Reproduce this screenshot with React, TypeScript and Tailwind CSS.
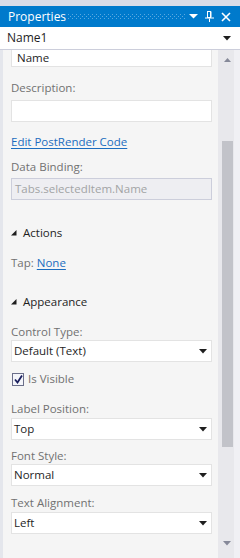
import React from "react";

const Arrow = ({ color = "#1e1e1e" }: { color?: string }) => (
  <svg width="8" height="5" viewBox="0 0 8 5">
    <polygon points="0,0 8,0 4,4.5" fill={color} />
  </svg>
);

const Label = ({ children, mt }: { children: React.ReactNode; mt: string }) => (
  <div className={`${mt} h-[16px] leading-[16px] text-[11.5px] text-[#717171]`}>{children}</div>
);

const Select = ({ value, mt }: { value: string; mt: string }) => (
  <div className={`${mt} h-[22px] w-[201px] bg-white border border-[#e3e3e3] flex items-center justify-between pl-[2px] pr-[4px]`}>
    <span className="text-[11.5px] text-[#1e1e1e] leading-[16px]">{value}</span>
    <Arrow />
  </div>
);

const Section = ({ title, mt }: { title: string; mt: string }) => (
  <div className={`${mt} h-[16px] flex items-center gap-[6px]`}>
    <svg width="6" height="6" viewBox="0 0 6 6">
      <polygon points="5.5,0 5.5,5.5 0,5.5" fill="#1e1e1e" />
    </svg>
    <span className="text-[11.5px] text-[#1e1e1e] leading-[16px]">{title}</span>
  </div>
);

export default function App() {
  return (
    <div className="w-[240px] h-[558px] bg-[#f5f5f5] flex flex-col overflow-hidden font-['Open_Sans',sans-serif]">
      <div className="h-[6px] bg-[#d9dde8]" />
      <div className="h-[21px] bg-[#007acc] flex items-center pl-[8px] pr-[9px]">
        <span className="w-[58px] text-[12px] text-white leading-[16px]">Properties</span>
        <svg className="ml-[2px]" width="118" height="6" viewBox="0 0 118 6">
          <defs>
            <pattern id="dots" width="4" height="4" patternUnits="userSpaceOnUse">
              <rect x="0" y="0" width="1" height="1" fill="#5aa9e0" />
              <rect x="2" y="2" width="1" height="1" fill="#5aa9e0" />
            </pattern>
          </defs>
          <rect width="118" height="6" fill="url(#dots)" />
        </svg>
        <div className="ml-[3px] flex items-center">
          <svg width="9" height="5" viewBox="0 0 9 5">
            <polygon points="0,0 9,0 4.5,4.5" fill="#ffffff" />
          </svg>
        </div>
        <svg className="ml-[7px]" width="9" height="11" viewBox="0 0 9 11">
          <rect x="2.5" y="0.5" width="3" height="6" fill="none" stroke="#ffffff" strokeWidth="1" />
          <rect x="5" y="0.5" width="1.5" height="6" fill="#ffffff" />
          <rect x="0" y="6.5" width="9" height="1" fill="#ffffff" />
          <rect x="4" y="7.5" width="1" height="3.5" fill="#ffffff" />
        </svg>
        <svg className="ml-[7px]" width="10" height="10" viewBox="0 0 10 10">
          <path d="M1 1 L9 9 M9 1 L1 9" stroke="#ffffff" strokeWidth="1.6" />
        </svg>
      </div>
      <div className="h-[23px] bg-white border-b border-[#cccedb] flex items-center justify-between pl-[7px] pr-[9px]">
        <span className="text-[12px] text-[#1e1e1e] leading-[16px]">Name1</span>
        <Arrow />
      </div>
      <div className="flex-1 flex min-h-0">
        <div className="w-[218px] border-l-[3px] border-[#e4e6ec] overflow-hidden">
          <div className="-mt-[5px] pl-[8px] flex flex-col">
            <div className="h-[22px] w-[201px] bg-white border border-[#e3e3e3] flex items-center pl-[5px] pt-[4px]">
              <span className="text-[11.5px] text-[#1e1e1e] leading-[12px]">Name</span>
            </div>
            <Label mt="mt-[13px]">Description:</Label>
            <div className="mt-[4px] h-[22px] w-[201px] bg-white border border-[#e3e3e3]" />
            <div className="mt-[12px] h-[16px] leading-[16px] text-[11.5px]">
              <span className="text-[#1c6dbf] underline underline-offset-2">Edit PostRender Code</span>
            </div>
            <Label mt="mt-[9px]">Data Binding:</Label>
            <div className="mt-[3px] h-[22px] w-[201px] bg-[#eeeef2] border border-[#cccedb] flex items-center pl-[3px]">
              <span className="text-[11.5px] text-[#a2a4a5] leading-[16px]">Tabs.selectedItem.Name</span>
            </div>
            <Section title="Actions" mt="mt-[25px]" />
            <div className="mt-[14px] h-[16px] leading-[16px] text-[11.5px]">
              <span className="text-[#717171]">Tap: </span>
              <span className="text-[#1c6dbf] underline underline-offset-2">None</span>
            </div>
            <Section title="Appearance" mt="mt-[23px]" />
            <Label mt="mt-[14px]">Control Type:</Label>
            <Select value="Default (Text)" mt="mt-[0px]" />
            <div className="mt-[9px] h-[16px] flex items-center gap-[4px] pl-[1px]">
              <div className="w-[12px] h-[13px] border border-[#6b6f8a] bg-[#f4f5fa] flex items-center justify-center">
                <svg width="9" height="9" viewBox="0 0 9 9">
                  <path d="M1 4.5 L3.5 7.5 L8 0.5" fill="none" stroke="#1a1f5e" strokeWidth="1.8" />
                </svg>
              </div>
              <span className="text-[11.5px] text-[#717171] leading-[16px]">Is Visible</span>
            </div>
            <Label mt="mt-[14px]">Label Position:</Label>
            <Select value="Top" mt="mt-[1px]" />
            <Label mt="mt-[8px]">Font Style:</Label>
            <Select value="Normal" mt="mt-[0px]" />
            <Label mt="mt-[9px]">Text Alignment:</Label>
            <Select value="Left" mt="mt-[1px]" />
          </div>
        </div>
        <div className="w-[22px] flex">
          <div className="w-[16px] bg-[#e8e8ec] flex flex-col items-center">
            <div className="mt-[8px] ml-[2px]">
              <svg width="7" height="4" viewBox="0 0 7 4">
                <polygon points="0,4 7,4 3.5,0" fill="#868999" />
              </svg>
            </div>
            <div className="mt-[79px] ml-[2px] w-[11px] h-[306px] bg-[#c2c3c9]" />
            <div className="mt-auto mb-[12px] ml-[2px]">
              <Arrow color="#868999" />
            </div>
          </div>
          <div className="flex-1 bg-[#f0f0f4]" />
        </div>
      </div>
    </div>
  );
}
